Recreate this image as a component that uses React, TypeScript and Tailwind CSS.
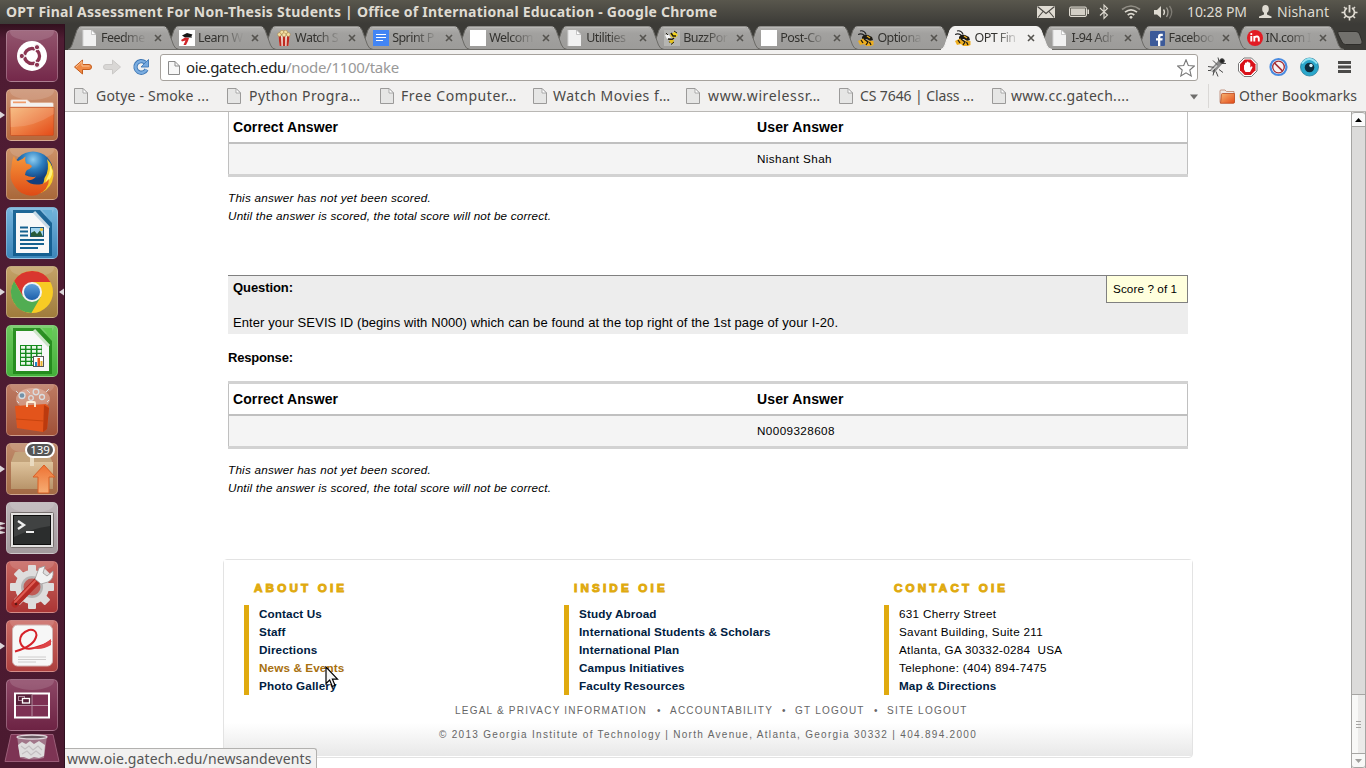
import React from 'react';

const ui = 'font-["Noto_Sans",sans-serif]';

/* ---------- small shared drawings ---------- */

function PageIcon({ className = '' }: { className?: string }) {
  return (
    <svg width="14" height="16" viewBox="0 0 14 16" className={className}>
      <path d="M.5 .5H9L13.500 5V15.500H.5Z" fill="#e6e6e5" stroke="#9b9a99" />
      <path d="M9 .5V5H13.500Z" fill="#fff" stroke="#9a9a9a" strokeWidth=".8" />
    </svg>
  );
}

function TabPage() {
  return (
    <svg width="16" height="16" viewBox="0 0 16 16">
      <path d="M1 0H9.500L14 4.500V16H1Z" fill="#f1f1f1" />
      <path d="M9.500 0V4.500H14Z" fill="#fff" stroke="#b9b9b9" strokeWidth=".8" />
      <path d="M1 16V0" stroke="#d2d2d2" />
    </svg>
  );
}

function Bee() {
  return (
    <svg width="16" height="16" viewBox="0 0 16 16">
      <path d="M2 1Q6 0 8 4M0 4.500Q3 3 6 5" fill="none" stroke="#222" strokeWidth="1.100" />
      <path d="M4 7Q6 3.500 10 5L14 7L15 10L12 11L9 9L4 9Z" fill="#1c1a14" />
      <path d="M0 11L5 8.500L9 10.500L15.500 11V15L13 16H8L6 14L2 15Z" fill="#eeae1e" />
      <path d="M6 9L10 12L8 15M11.500 12L13 15M3 10L5 13" stroke="#1c1a14" strokeWidth="1.300" fill="none" />
      <path d="M9 6L12 8" stroke="#eeae1e" strokeWidth="1.400" />
    </svg>
  );
}

function BuzzBee() {
  return (
    <svg width="16" height="16" viewBox="0 0 16 16">
      <rect width="16" height="16" fill="#b5b5b2" />
      <path d="M1 5L5 5L7 8L3 9Z" fill="#f4f4f4" />
      <path d="M6 4L11 2L14 5L11 8L7 7Z" fill="#f1d320" />
      <path d="M7 3L9 6L12 6M4 9L8 9.500L10 8M5 12L8 11" stroke="#201d10" strokeWidth="1.500" fill="none" />
      <path d="M6 10L10 10L9 14L5 12Z" fill="#e4c01b" />
      <path d="M10 1L13 3M7 14.500L10 12M2 3L4 5" stroke="#201d10" strokeWidth="1" />
    </svg>
  );
}

const favicons: Record<string, React.ReactNode> = {
  page: <TabPage />,
  bee: <Bee />,
  buzz: <BuzzBee />,
  blank: <div className="h-4 w-4 bg-white" />,
  learn: (
    <svg width="16" height="16" viewBox="0 0 16 16">
      <rect width="16" height="16" fill="#fff" />
      <path d="M3 5.500L8 3L13.500 4.500L11 7.500L6 7.500Z" fill="#161616" />
      <path d="M12 5V8" stroke="#161616" />
      <path d="M2 10L6 7.500L10 8L9 11L7 15H4.500L6.500 10.500L3 11.500Z" fill="#d0262b" />
    </svg>
  ),
  popcorn: (
    <svg width="16" height="16" viewBox="0 0 16 16">
      <path d="M2.500 5.500H13.500L12.500 16H3.500Z" fill="#f2e6dd" />
      <path d="M2.500 6H5L5.500 16H3.500ZM6.800 6H9.200V16H6.800ZM11 6H13.500L12.500 16H10.500Z" fill="#bf2a20" />
      <g fill="#f3dfa6" stroke="#a77f3c" strokeWidth=".5">
        <circle cx="3.500" cy="4.500" r="1.900" /><circle cx="6" cy="2.300" r="2" /><circle cx="9.500" cy="2.300" r="2" />
        <circle cx="12.300" cy="4.500" r="1.900" /><circle cx="8" cy="4.800" r="2" />
      </g>
    </svg>
  ),
  docs: (
    <svg width="16" height="16" viewBox="0 0 16 16">
      <rect width="16" height="16" fill="#4285f4" />
      <path d="M3 4.500H13M3 7.500H13M3 10.500H10" stroke="#fff" strokeWidth="1.200" />
    </svg>
  ),
  fb: (
    <svg width="15" height="15" viewBox="0 0 15 15">
      <rect width="15" height="15" rx="1" fill="#3c5a99" />
      <path d="M8 15V9.500H6V7.300H8V5.500Q8 2.800 10.700 2.800H12.800V5H11.300Q10.300 5 10.300 6V7.300H12.700L12.400 9.500H10.300V15Z" fill="#fff" />
    </svg>
  ),
  incom: (
    <svg width="16" height="16" viewBox="0 0 16 16">
      <circle cx="8" cy="8" r="8" fill="#e31b23" />
      <path d="M4.300 6V11.500M7.300 11.500V6M7.300 8Q8 6.300 10 6.500Q11.800 6.700 11.800 8.700V11.500" stroke="#fff" strokeWidth="1.900" fill="none" />
      <circle cx="4.300" cy="4" r="1.100" fill="#fff" />
    </svg>
  ),
};

/* ---------- title bar ---------- */

function TitleBar() {
  return (
    <div className={`flex h-6 w-full items-center bg-gradient-to-b from-[#59574d] to-[#3c3b37] text-[14px] text-[#dfdbd2] ${ui}`}>
      <div className="w-[1029px] whitespace-nowrap pl-[6px] font-bold leading-6 tracking-[0.235px]">
        OPT Final Assessment For Non-Thesis Students | Office of International Education - Google Chrome
      </div>
      <svg width="150" height="24" viewBox="1029 0 150 24" className="shrink-0">
        <rect x="1037" y="6" width="18" height="12" fill="#dfdbd2" />
        <path d="M1037.500 6.500L1046 13.500L1054.500 6.500M1038 17.500L1043 11.500M1054 17.500L1049 11.500" fill="none" stroke="#4a4843" strokeWidth="1.100" />
        <rect x="1069.500" y="7" width="17" height="9.500" rx="1.500" fill="#6a6860" stroke="#dfdbd2" />
        <rect x="1071" y="8.500" width="14" height="6.500" fill="#d3cfc6" />
        <rect x="1087.500" y="9.500" width="1.500" height="4.500" fill="#dfdbd2" />
        <path d="M1100 8L1107.500 15L1104 18.500V5L1107.500 8.500L1100 15.500" fill="none" stroke="#dfdbd2" strokeWidth="1.100" />
        <g fill="none" stroke="#dfdbd2" strokeWidth="1.700">
          <path d="M1122 9.500Q1131 2.500 1140 9.500" opacity=".45" />
          <path d="M1125 12.200Q1131 7.500 1137 12.200" />
          <path d="M1127.700 15Q1131 12.300 1134.300 15" />
        </g>
        <circle cx="1131" cy="17.300" r="1.400" fill="#dfdbd2" />
        <path d="M1154 10H1157L1161 6V18L1157 14.500H1154Z" fill="#dfdbd2" />
        <g fill="none" stroke="#dfdbd2" strokeWidth="1.300">
          <path d="M1163.500 9.500Q1165.500 12 1163.500 15" />
          <path d="M1166.500 7.500Q1169.500 12 1166.500 17" opacity=".6" />
          <path d="M1169.500 6Q1174 12 1169.500 18.500" opacity=".35" />
        </g>
      </svg>
      <span className="w-[79px] shrink-0 whitespace-nowrap pl-[8px] leading-6 tracking-[-0.085px]">10:28 PM</span>
      <svg width="14" height="14" viewBox="0 0 14 14" className="shrink-0" fill="#dfdbd2">
        <ellipse cx="7.500" cy="4" rx="3.300" ry="4" />
        <path d="M6 7H9V9.500L13.500 11.500V13H1V11.500L6 9.500Z" />
      </svg>
      <span className="w-[69px] shrink-0 pl-[5px] leading-6 tracking-[0.138px]">Nishant</span>
      <svg width="17" height="18" viewBox="0 0 17 18" className="shrink-0">
        <g stroke="#dfdbd2" fill="none">
          <path d="M6 5A5 5 0 1 0 11 5" strokeWidth="1.700" />
          <path d="M8.500 2V9.500" strokeWidth="1.800" />
          <path d="M8.500 14.500V17.500M.5 9.500H3.500M13.500 9.500H16.500M3 4L4.800 5.800M14 4L12.200 5.800M3 15L4.800 13.200M14 15L12.200 13.200" strokeWidth="1.600" />
        </g>
      </svg>
    </div>
  );
}

/* ---------- launcher ---------- */

type LauncherItem = { name: string; tone: string; running?: boolean; active?: boolean; multi?: boolean; art: React.ReactNode };

const launcher: LauncherItem[] = [
  {
    name: 'dash', tone: 'from-[#93556e] to-[#74284a]',
    art: (
      <>
        <circle cx="26" cy="26" r="15" fill="#fff" />
        <circle cx="26" cy="26" r="7.500" fill="none" stroke="#8b3552" strokeWidth="3.400" />
        <path d="M26 26L13 26M26 26L32.500 14.700M26 26L32.500 37.300" stroke="#fff" strokeWidth="1.500" />
        <circle cx="26" cy="26" r="5.500" fill="#fff" />
        <g fill="#8b3552" stroke="#fff" strokeWidth="1"><circle cx="15.800" cy="26" r="2.600" /><circle cx="31" cy="17.200" r="2.600" /><circle cx="31" cy="34.800" r="2.600" /></g>
      </>
    ),
  },
  {
    name: 'files', tone: 'from-[#cb9172] to-[#b5683d]', running: true,
    art: (
      <>
        <path d="M4.500 18V12Q4.500 10.500 6 10.500H21L24.500 13.500H46Q47.500 13.500 47.500 15V18Z" fill="#f4f1ee" stroke="#dba98b" strokeWidth=".7" />
        <rect x="7" y="12.500" width="13" height="1.700" fill="#ef9b68" />
        <path d="M4 18.500H48L47.500 45.500Q47.500 46.500 46.500 46.500H5.500Q4.500 46.500 4.500 45.500Z" fill="url(#orangeFolder)" stroke="#c54d20" strokeWidth=".7" />
        <path d="M4 18.500H48V25Q26 39 4.500 38Z" fill="#fff" opacity=".13" />
      </>
    ),
  },
  {
    name: 'firefox', tone: 'from-[#cc9167] to-[#a9683a]',
    art: (
      <>
        <circle cx="27" cy="23.500" r="20" fill="url(#fxBlue)" />
        <path d="M41 11Q48 18 47.500 28Q46 40 35 45L30 44Q38 38 38.500 30Q44 22 41 11Z" fill="#f6c927" />
        <path d="M42.500 14Q46 22 41 30L39 36Q46 31 46.500 23Z" fill="#fff27a" />
        <path d="M8 8Q9 12 12 13Q16 12 19.500 8.500Q18.500 12 20 15.500Q25 16 26 18.500Q24 21 21 22Q19 24 19 27Q25 30 30 28.500Q27 33 20 32Q25 38 36 36Q41 34 43 31Q43 42 31 47Q17 50 9 39Q2 30 5.500 19Q6 11 8 8Z" fill="url(#fxFox)" />
      </>
    ),
  },
  {
    name: 'writer', tone: 'from-[#75b4dd] to-[#3c86b9]',
    art: (
      <>
        <path d="M7 3H34L46 16V49H7Z" fill="#0e588a" opacity=".85" />
        <path d="M36 3L46 3V14Z" fill="#67aed7" />
        <path d="M10 6H28L43 21V46H10Z" fill="#f8f8f8" />
        <path d="M28 5L43 21" stroke="#c7dae6" strokeWidth="3" />
        <path d="M14 20.500H22M14 24.500H22M14 28.500H22M14 33H38M14 37H38M14 41H32" stroke="#16618f" strokeWidth="1.800" />
        <rect x="24.500" y="20.500" width="13" height="9" fill="#a4d5ef" stroke="#1c5a84" />
        <path d="M25 29.500V26L28.500 24L31 27L34 23.500L37 29.500Z" fill="#275b39" />
        <circle cx="35.500" cy="22.500" r="1.600" fill="#f4cb40" />
      </>
    ),
  },
  {
    name: 'chrome', tone: 'from-[#c4a268] to-[#a07c3c]', running: true, active: true,
    art: (
      <>
        <circle cx="26" cy="26" r="21" fill="#f8cb24" />
        <path d="M26 16H44.500A21 21 0 0 0 8.100 15L17.300 31Z" fill="#d9362f" />
        <path d="M17.300 31L8.100 15A21 21 0 0 0 25.400 47L34.700 31Z" fill="#51ad52" />
        <circle cx="26" cy="26" r="10" fill="#f2f2f2" />
        <circle cx="26" cy="26" r="8" fill="url(#chromeBlue)" />
      </>
    ),
  },
  {
    name: 'calc', tone: 'from-[#6cc95d] to-[#44b03a]',
    art: (
      <>
        <path d="M7 3H34L46 16V49H7Z" fill="#208519" opacity=".85" />
        <path d="M36 3L46 3V14Z" fill="#5fc850" />
        <path d="M10 6H28L43 21V46H10Z" fill="#f8f8f8" />
        <path d="M28 5L43 21" stroke="#cbe5c7" strokeWidth="3" />
        <rect x="14" y="20" width="22" height="21" fill="#168a1e" />
        <g fill="#eaf7e9">
          {[21, 25, 29, 33, 37].map((y) => [15, 20.5, 26, 31.5].map((x) => <rect key={`${x}-${y}`} x={x} y={y} width="4" height="2.700" />))}
        </g>
        <rect x="27.500" y="31.500" width="10" height="10" fill="#fff" stroke="#555" />
        <path d="M29 37H31V41H29Z" fill="#1e88c9" /><path d="M31.500 33H34V41H31.500Z" fill="#e2571c" /><path d="M34.500 36H36.500V41H34.500Z" fill="#e8b329" />
      </>
    ),
  },
  {
    name: 'software', tone: 'from-[#bd7a62] to-[#a05037]',
    art: (
      <>
        <ellipse cx="27" cy="15" rx="17" ry="11" fill="#f6cdbb" opacity=".45" />
        <g fill="none" stroke="#d9dde0" strokeWidth="1.300">
          <circle cx="16" cy="11.500" r="3" fill="#7291a8" /><circle cx="30" cy="8" r="2.800" /><circle cx="36" cy="13" r="2.500" /><circle cx="25" cy="14" r="2.300" />
          <path d="M21 6L24 9M10 7L12 9M40 8L43 5M41 18L43 16M11 17L13 19" strokeWidth="1" />
        </g>
        <path d="M9 22L40 20L43 23L41 45L37 48L11 44Z" fill="#e3541b" />
        <path d="M38 21L43 24L41 45L37 48Z" fill="#bb3a0e" />
        <path d="M10 35L38 37" stroke="#c8440f" />
        <path d="M21 23V19Q21 18 22 18H28Q29 18 29 19V23" fill="none" stroke="#fff1d9" strokeWidth="1.800" />
      </>
    ),
  },
  {
    name: 'updates', tone: 'from-[#c08a6a] to-[#a36a45]', running: true,
    art: (
      <>
        <path d="M5 19L9 9H42L46 18V46H5Z" fill="#c3a47c" />
        <path d="M5 19H47V46H5Z" fill="url(#boxFace)" />
        <path d="M24 9H28V23H24Z" fill="#e9dac0" />
        <path d="M38 22L49 34H43V50H32V34H27Z" fill="url(#arrowUp)" stroke="#d85e25" strokeWidth="1" />
      </>
    ),
  },
  {
    name: 'terminal', tone: 'from-[#bdb5b8] to-[#a39a9d]', multi: true,
    art: (
      <>
        <rect x="4.500" y="10.500" width="43" height="35" rx="1" fill="#e4e2e1" stroke="#77706f" />
        <rect x="7.500" y="13.500" width="37" height="29" fill="#2b2d2d" stroke="#0d0d0d" />
        <path d="M8 14H44V24Q24 27 8 35Z" fill="#fff" opacity=".1" />
        <path d="M12 19L18 23L12 27" fill="none" stroke="#eee" strokeWidth="2.300" />
        <path d="M20 30H28" stroke="#eee" strokeWidth="2" />
      </>
    ),
  },
  {
    name: 'settings', tone: 'from-[#c76660] to-[#ab3535]',
    art: (
      <>
        <g fill="#dedddd">
          <circle cx="26" cy="26" r="17" />
          {[0, 45, 90, 135].map((a) => <rect key={a} x="22" y="4" width="8" height="44" rx="1" transform={`rotate(${a} 26 26)`} />)}
        </g>
        <circle cx="26" cy="26" r="11" fill="#b6b4b4" /><circle cx="26" cy="26" r="8.500" fill="#c05a55" />
        <path d="M9 43L31 20" stroke="#b42a25" strokeWidth="7" strokeLinecap="round" />
        <path d="M9 41L29 20" stroke="#e05d54" strokeWidth="2" strokeLinecap="round" />
        <path d="M29 18L33 7L39 5L37 12L41 15L47 10Q48 18 42 21L35 23Z" fill="#f2f2f2" stroke="#9c9898" strokeWidth=".8" />
        <circle cx="10" cy="43" r="1.300" fill="#5c1714" />
      </>
    ),
  },
  {
    name: 'reader', tone: 'from-[#ca6a64] to-[#ad3f3e]', running: true,
    art: (
      <>
        <rect x="6.500" y="5" width="40" height="41" rx="5" fill="#f7f7f7" stroke="#d1b5b4" />
        <path d="M9 31.500Q29 26 30.500 15Q30 9 23 10Q14 13 14 21Q16 31 28 28Q37 26 45 21" fill="none" stroke="#d6232b" strokeWidth="2" />
        <path d="M25 28Q34 28 45 19V25Q35 31 25 28Z" fill="#dd4447" />
        <path d="M12 37H40M12 39.500H40M12 42H30" stroke="#c8c6c6" strokeWidth=".9" />
      </>
    ),
  },
  {
    name: 'workspaces', tone: 'from-[#8d4766] to-[#6d2344]',
    art: (
      <>
        <rect x="9" y="14.500" width="34" height="24" fill="#7d3053" stroke="#fff" strokeWidth="2" />
        <path d="M10 15.500H26V26.500H10Z" fill="#562039" />
        <path d="M26 15.500V37.500M10 26.500H42" stroke="#b48ca0" strokeWidth="1" />
        <rect x="12.500" y="17.500" width="6" height="4" fill="none" stroke="#b48ca0" />
        <rect x="16.500" y="19.500" width="7" height="4.500" fill="#562039" stroke="#fff" strokeWidth="1.300" />
      </>
    ),
  },
];

function Launcher() {
  return (
    <div className="flex w-[65px] shrink-0 flex-col items-center overflow-hidden border-r border-[#2f1020] bg-gradient-to-b from-[#32101e] via-[#4f1c33] via-[2%] to-[#4b1a30] pt-[6px]">
      <svg width="0" height="0" className="absolute">
        <defs>
          <linearGradient id="orangeFolder" x1="0" y1="0" x2="1" y2="1"><stop stopColor="#f6b573" /><stop offset="1" stopColor="#e44a17" /></linearGradient>
          <radialGradient id="fxBlue" cx=".5" cy=".2"><stop stopColor="#8fcdf0" /><stop offset=".5" stopColor="#2c7fc0" /><stop offset="1" stopColor="#123f7d" /></radialGradient>
          <linearGradient id="fxFox" x1="0" y1="0" x2="0" y2="1"><stop stopColor="#f6953a" /><stop offset="1" stopColor="#de4b16" /></linearGradient>
          <linearGradient id="chromeBlue" x1="0" y1="0" x2="0" y2="1"><stop stopColor="#5f9fda" /><stop offset="1" stopColor="#1c5faa" /></linearGradient>
          <linearGradient id="boxFace" x1="0" y1="0" x2="0" y2="1"><stop stopColor="#dec39c" /><stop offset="1" stopColor="#b8946a" /></linearGradient>
          <linearGradient id="arrowUp" x1="0" y1="0" x2="0" y2="1"><stop stopColor="#ee7233" /><stop offset="1" stopColor="#f6ad74" /></linearGradient>
        </defs>
      </svg>
      {launcher.map((it) => (
        <div key={it.name} className="relative mb-[7px] flex h-[52px] w-full shrink-0 justify-center">
          <div className={`h-[52px] w-[52px] rounded-[5px] border border-white/25 bg-gradient-to-b ${it.tone}`}>
            <svg width="52" height="52" viewBox="0 0 52 52" className="-m-px">
              <ellipse cx="26" cy="2" rx="22" ry="9" fill="#fff" opacity=".13" />
              {it.art}
            </svg>
          </div>
          {it.running && <svg width="5" height="8" viewBox="0 0 5 8" className="absolute left-0 top-[22px]"><path d="M0 .5L5 4L0 7.500Z" fill="#dcd6d9" /></svg>}
          {it.active && <svg width="5" height="8" viewBox="0 0 5 8" className="absolute right-0 top-[22px]"><path d="M5 .5L0 4L5 7.500Z" fill="#dcd6d9" /></svg>}
          {it.multi && <svg width="5" height="12" viewBox="0 0 5 12" className="absolute left-0 top-[20px]"><path d="M0 0L5 1.500L0 3ZM0 4.500L5 6L0 7.500ZM0 9L5 10.500L0 12Z" fill="#dcd6d9" stroke="#dcd6d9" strokeWidth=".5" /></svg>}
          {it.name === 'updates' && (
            <div className={`absolute -top-px left-[25px] h-4 w-[30px] rounded-full border-2 border-white bg-[#565656] text-center text-[11.500px] leading-[12px] text-white ${ui}`}>139</div>
          )}
        </div>
      ))}
      <svg width="56" height="32" viewBox="0 0 56 32" className="-mt-[5px] shrink-0">
        <path d="M7 1.500H49L55 28.500H1Z" fill="#7d3454" stroke="#9b5d78" />
        <path d="M13 3H43L40 25Q28 28 16 25Z" fill="#b9a3ad" opacity=".6" />
        <ellipse cx="28" cy="4" rx="15" ry="2" fill="#6b5a62" stroke="#ded5d9" strokeWidth="1.300" />
        <path d="M14 12L18 9L22 11L26 8L30 11L35 8L41 12L40 23L35 25L30 24L25 26L20 24L16 24Z" fill="#dedddd" />
        <path d="M17 13L21 16L25 13L29 17L34 13L38 17M18 21L23 18L27 22L32 18L37 22" fill="none" stroke="#c3bfc1" strokeWidth="1.100" />
      </svg>
    </div>
  );
}

/* ---------- tabs ---------- */

const tabs = [
  { icon: 'page', label: 'Feedme' },
  { icon: 'learn', label: 'Learn W' },
  { icon: 'popcorn', label: 'Watch S' },
  { icon: 'docs', label: 'Sprint P' },
  { icon: 'blank', label: 'Welcom' },
  { icon: 'page', label: 'Utilities' },
  { icon: 'buzz', label: 'BuzzPor' },
  { icon: 'blank', label: 'Post-Co' },
  { icon: 'bee', label: 'Optiona' },
  { icon: 'bee', label: 'OPT Fin', active: true },
  { icon: 'page', label: 'I-94 Adr' },
  { icon: 'fb', label: 'Faceboo' },
  { icon: 'incom', label: 'IN.com I' },
];

const layers = ['z-[13]', 'z-[12]', 'z-[11]', 'z-10', 'z-[9]', 'z-[8]', 'z-[7]', 'z-[6]', 'z-[5]', 'z-20', 'z-[4]', 'z-[3]', 'z-[2]'];

function TabStrip() {
  return (
    <div className="flex h-[26px] items-end bg-[#3c3b37] pl-[3px]">
      {tabs.map((t, i) => (
        <div key={i} className={`relative h-[25px] w-[97.050px] shrink-0 ${layers[i]}`}>
          <svg width="113" height="25" viewBox="0 0 113 25" className="absolute left-0 top-0">
            <defs>
              <linearGradient id="tabGray" x1="0" y1="0" x2="0" y2="1"><stop stopColor="#b1b0ae" /><stop offset=".3" stopColor="#a2a19f" /><stop offset="1" stopColor="#9c9b99" /></linearGradient>
            </defs>
            <path
              d="M0 24.500Q2.500 24 4 20L9 5Q10.500 1.500 14 1.500H95Q98.500 1.500 100 5L105.500 20Q107 24 111 24.500Z"
              fill={t.active ? '#f2f1f0' : 'url(#tabGray)'}
              stroke={t.active ? '#f2f1f0' : '#6b6a66'}
              strokeWidth="1"
            />
            {!t.active && <path d="M11 2.500Q12 2 14 2H95Q97 2 98 2.700" fill="none" stroke="#c9c8c6" strokeWidth=".8" />}
          </svg>
          <div className="relative flex h-full items-center pl-[14px] pt-px">
            <div className="flex h-4 w-4 items-center justify-center">{favicons[t.icon]}</div>
            <div className={`ml-[3px] w-[48px] overflow-hidden whitespace-nowrap text-[12.500px] leading-[18px] tracking-[-0.550px] text-[#33322f] [mask-image:linear-gradient(to_right,black_45%,transparent_95%)] ${ui}`}>
              {t.label}
            </div>
            <svg width="8" height="8" viewBox="0 0 8 8" className="ml-[5px]"><path d="M1 1L7 7M7 1L1 7" stroke="#55534f" strokeWidth="1.600" /></svg>
          </div>
        </div>
      ))}
      <svg width="30" height="22" viewBox="0 0 30 22" className="relative mb-[2px] ml-[6px]">
        <path d="M3 5.500H20Q22.500 5.500 23.500 8L26 15Q27 18.500 24 18.500H9.500Q7 18.500 6 16L2 8Q1 5.500 3 5.500Z" fill="#72716d" stroke="#2e2d2a" />
      </svg>
    </div>
  );
}

/* ---------- toolbar and bookmarks ---------- */

function Toolbar() {
  return (
    <div className="flex h-[34px] items-center bg-[#f2f1f0]">
      <svg width="95" height="34" viewBox="65 50.500 95 34" className="shrink-0">
        <path d="M74.500 67.500L82.500 60.500V65H89Q91.500 65 91.500 67.500Q91.500 70 89 70H82.500V74.500Z" fill="#f08a45" stroke="#c45c1c" />
        <path d="M76 67.500L82 62V66.500H89.500" stroke="#fbc193" fill="none" />
        <path d="M120.500 67.500L112.500 60.500V65H106Q103.500 65 103.500 67.500Q103.500 70 106 70H112.500V74.500Z" fill="#d9d7d5" stroke="#cbc9c7" />
        <path d="M145 63A5.800 5.800 0 1 0 146.500 70" fill="none" stroke="#3f78b5" strokeWidth="4.300" />
        <path d="M145 63A5.800 5.800 0 1 0 146.500 70" fill="none" stroke="#7bade0" strokeWidth="2.400" />
        <path d="M148.500 60V67.500H141Z" fill="#76a9df" stroke="#3f78b5" strokeWidth=".9" />
      </svg>
      <div className={`mt-px flex h-[27px] w-[1038px] shrink-0 items-center rounded-[3px] border border-[#a6a29d] bg-white pl-[7px] text-[15px] ${ui}`}>
        <svg width="12" height="16" viewBox="0 0 12 16" className="shrink-0">
          <path d="M.5 1.500H7L11.500 6V14.500H.5Z" fill="#f7f7f7" stroke="#8b8b8b" />
          <path d="M7 1.500V6H11.500" fill="none" stroke="#8b8b8b" />
        </svg>
        <span className="-mt-px ml-[6px] grow whitespace-nowrap leading-6 tracking-[-0.310px] text-[#222]">oie.gatech.edu<span className="text-[#999]">/node/1100/take</span></span>
        <svg width="18" height="18" viewBox="0 0 18 18" className="mr-[2px] shrink-0">
          <path d="M9 .8L11.300 6.500L17.400 7L12.800 11L14.200 17L9 13.800L3.800 17L5.200 11L.6 7L6.700 6.500Z" fill="#fff" stroke="#777" strokeWidth="1.100" />
        </svg>
      </div>
      <svg width="168" height="34" viewBox="1198 50.500 168 34" className="shrink-0">
        <g stroke="#4b4b4b" fill="none" strokeWidth="1">
          <path d="M1212 72L1221 62" stroke="#8a8a8a" strokeWidth="5" />
          <path d="M1208 67L1215 68L1213 76M1208 71L1214 71M1213 61L1217 65M1219 70L1223 73M1216 72L1218 77M1219 62L1218 58M1222 64L1226 64" />
          <path d="M1211 72L1217 66" stroke="#cfcfcf" strokeWidth="1.600" />
          <circle cx="1222" cy="61.500" r="2.300" fill="#222" />
        </g>
        <path d="M1244 58.500H1251.500L1257 64V71.500L1251.500 77H1244L1238.500 71.500V64Z" fill="#fff" stroke="#777" />
        <path d="M1244.700 60H1250.800L1255.500 64.700V70.800L1250.800 75.500H1244.700L1240 70.800V64.700Z" fill="#d9121a" />
        <path d="M1244 66Q1244 65 1245 65V63.500Q1246 62.500 1246.700 63.500V62.500Q1248 61.500 1248.700 63Q1250 62.500 1250.300 64V68L1252 66.500L1252.500 68L1250 72.500H1245.500L1244 70Z" fill="#fff" />
        <circle cx="1278.500" cy="67.500" r="8" fill="#fff" stroke="#4a8be0" strokeWidth="2.200" />
        <circle cx="1278.500" cy="67.500" r="5.800" fill="#f9f3f3" stroke="#a12a34" strokeWidth="1.300" />
        <path d="M1274.500 63.500L1282.500 71.500" stroke="#a12a34" strokeWidth="1.700" />
        <circle cx="1309.500" cy="67.500" r="9" fill="#2ba7cb" stroke="#2a7e9a" strokeWidth=".8" />
        <path d="M1302 64Q1309 55 1317 64" fill="none" stroke="#92e3f2" strokeWidth="2" />
        <circle cx="1309.500" cy="68" r="4.800" fill="#0d2c3c" />
        <circle cx="1311" cy="66" r="1.700" fill="#d8f2f8" />
        <path d="M1338 63H1351M1338 67.500H1351M1338 72H1351" stroke="#4b4a48" strokeWidth="2.800" />
      </svg>
    </div>
  );
}

const bookmarks = [
  { label: 'Gotye - Smoke ...', w: 'w-[153px]', t: 'ml-[8px] tracking-[0.184px]' },
  { label: 'Python Progra…', w: 'w-[153px]', t: 'ml-[8px] tracking-[0.418px]' },
  { label: 'Free Computer…', w: 'w-[153px]', t: 'ml-[7px] tracking-[0.600px]' },
  { label: 'Watch Movies f…', w: 'w-[153px]', t: 'ml-[6px] tracking-[0.491px]' },
  { label: 'www.wirelessr…', w: 'w-[153px]', t: 'ml-[8px] tracking-[0.634px]' },
  { label: 'CS 7646 | Class ...', w: 'w-[153px]', t: 'ml-[7px] tracking-[-0.101px]' },
  { label: 'www.cc.gatech....', w: 'w-[199px]', t: 'ml-[5px] tracking-[0.301px]' },
];

function Bookmarks() {
  return (
    <div className={`flex h-[28px] items-center border-b border-[#b9b7b4] bg-[#f2f1f0] pb-[3px] pl-[9px] text-[14px] text-[#4a4947] ${ui}`}>
      {bookmarks.map((b) => (
        <div key={b.label} className={`flex shrink-0 items-center ${b.w}`}>
          <PageIcon className="shrink-0" />
          <span className={`whitespace-nowrap leading-6 ${b.t}`}>{b.label}</span>
        </div>
      ))}
      <svg width="8" height="6" viewBox="0 0 8 6" className="-ml-px mt-[2px] shrink-0"><path d="M0 .5H8L4 5.500Z" fill="#6f6e6c" /></svg>
      <div className="ml-[10px] h-6 w-px shrink-0 bg-[#dad8d6]" />
      <svg width="17" height="15" viewBox="0 0 17 15" className="ml-[10px] shrink-0">
        <path d="M1 13.500V2Q1 1 2 1H6L7.500 2.500H15V13.500Z" fill="#efe9e4" stroke="#b9806a" strokeWidth=".8" />
        <path d="M2.500 5.500Q2.500 4.500 3.500 4.500H15.500V13Q15.500 14.300 14.500 14.300H1.500Z" fill="url(#orangeFolder)" stroke="#bb4a20" strokeWidth=".8" />
      </svg>
      <span className="ml-[3px] whitespace-nowrap leading-6 tracking-[0.116px]">Other Bookmarks</span>
    </div>
  );
}

/* ---------- page ---------- */

function AnswerTable({ answer, top }: { answer: string; top?: boolean }) {
  return (
    <div className={`border-b-[3px] border-[#d2d2d2] ${top ? 'border-t-[3px]' : ''}`}>
      <div className="border-x border-[#c0c0c0]">
        <div className="flex h-8 items-center border-b-2 border-[#c0c0c0] text-[14px] font-bold leading-[30px] tracking-[0.100px]">
          <div className="w-[524px] pl-[4px]">Correct Answer</div>
          <div className="pl-[4px] tracking-[0.141px]">User Answer</div>
        </div>
        <div className="flex h-[30px] items-center bg-[#f4f4f4] pl-[528px] text-[11.700px] tracking-[0.400px]">{answer}</div>
      </div>
    </div>
  );
}

function NotScored() {
  return (
    <div className="mt-[12px] text-[11.700px] italic leading-[18px] tracking-[0.188px]">
      <p className="tracking-[0.240px]">This answer has not yet been scored.</p>
      <p>Until the answer is scored, the total score will not be correct.</p>
    </div>
  );
}

const columns = [
  { title: 'ABOUT OIE', links: ['Contact Us', 'Staff', 'Directions', 'News & Events', 'Photo Gallery'] },
  { title: 'INSIDE OIE', links: ['Study Abroad', 'International Students & Scholars', 'International Plan', 'Campus Initiatives', 'Faculty Resources'] },
];

function Heading({ children }: { children: React.ReactNode }) {
  return <h3 className="h-[45px] pl-[10px] pt-[19px] text-[11.700px] font-bold leading-[18px] tracking-[3.150px] text-[#e0aa0f] [-webkit-text-stroke:1px_#e0aa0f]">{children}</h3>;
}

function Footer() {
  return (
    <div className="-ml-[5px] mt-[62px] h-[199px] w-[970px] rounded-[4px] border border-[#e3e3e3] bg-white">
      <div className="flex h-[196px] flex-col bg-[linear-gradient(to_bottom,white_83%,#e8e8e8_100%)] text-[11.700px]">
        <div className="flex pl-[20px]">
          {columns.map((c) => (
            <div key={c.title} className="w-80">
              <Heading>{c.title}</Heading>
              <ul className="border-l-[5px] border-[#e0aa0f] pl-[10px] font-bold leading-[18px] tracking-[0.120px] text-[#00203f]">
                {c.links.map((l) => <li key={l} className={l === 'News & Events' ? 'text-[#a8700f]' : ''}>{l}</li>)}
              </ul>
            </div>
          ))}
          <div className="w-72">
            <Heading>CONTACT OIE</Heading>
            <div className="border-l-[5px] border-[#e0aa0f] pl-[10px] leading-[18px] tracking-[0.300px]">
              <p>631 Cherry Street</p>
              <p>Savant Building, Suite 211</p>
              <p>Atlanta, GA 30332-0284&nbsp; USA</p>
              <p>Telephone: (404) 894-7475</p>
              <p className="font-bold tracking-[0.120px] text-[#00203f]">Map &amp; Directions</p>
            </div>
          </div>
        </div>
        <div className="mt-[6px] flex h-[18px] items-center whitespace-nowrap pl-[231px] text-[10px] tracking-[1.220px] text-[#666]">
          <span className="w-[202px]">LEGAL &amp; PRIVACY INFORMATION</span>
          <span className="w-[13px]">•</span><span className="w-[112px]">ACCOUNTABILITY</span>
          <span className="w-[13px]">•</span><span className="w-[79px]">GT LOGOUT</span>
          <span className="w-[13px]">•</span><span>SITE LOGOUT</span>
        </div>
        <div className="mt-[7px] h-[18px] whitespace-nowrap pl-[215px] text-[10px] leading-[18px] tracking-[1.298px] text-[#666]">
          © 2013 Georgia Institute of Technology | North Avenue, Atlanta, Georgia 30332 | 404.894.2000
        </div>
      </div>
    </div>
  );
}

function Page() {
  return (
    <div className='relative h-[656px] grow overflow-hidden bg-white pl-[163px] font-["Liberation_Sans",Arial,sans-serif] text-[13px] text-black'>
      <div className="w-[960px]">
        <AnswerTable answer="Nishant Shah" />
        <NotScored />
        <div className="relative mt-[50px] h-[59px] border-t border-[#808080] bg-[#ededed] pl-[5px]">
          <div className="pt-[3px] font-bold leading-[18px] tracking-[-0.083px]">Question:</div>
          <div className="mt-[17px] whitespace-nowrap leading-[18px] tracking-[0.093px]">
            Enter your SEVIS ID (begins with N000) which can be found at the top right of the 1st page of your I-20.
          </div>
          <div className="absolute -top-px right-0 flex h-[28px] w-[82px] items-center border border-[#808080] bg-[#ffffdd] pl-[6px] text-[11.700px] tracking-[0.100px]">Score ? of 1</div>
        </div>
        <div className="mb-[14px] mt-[15px] font-bold leading-[18px] tracking-[-0.182px]">Response:</div>
        <AnswerTable answer="N0009328608" top />
        <NotScored />
        <Footer />
      </div>
      <div className={`absolute bottom-0 left-0 h-[20px] w-[252px] rounded-tr-[3px] border-r border-t border-[#b2b1af] bg-[#f2f1f0] pl-[2px] text-[14px] leading-[19px] tracking-[0.110px] text-[#555] ${ui}`}>
        www.oie.gatech.edu/newsandevents
      </div>
      <svg width="14" height="22" viewBox="0 0 14 22" className="absolute left-[260px] top-[554px]">
        <path d="M1 1V17.500L4.700 14L7.300 20.500L10 19.300L7.400 13.200H12.500Z" fill="#f5f5f5" stroke="#000" strokeWidth="1.200" />
      </svg>
    </div>
  );
}

function Scrollbar() {
  return (
    <div className="flex h-[656px] w-[15px] shrink-0 flex-col border-x border-[#a6a5a3] bg-[#dcdbda]">
      <div className="flex h-[15px] items-center justify-center rounded-t-[3px] border-b border-t border-[#a6a5a3] bg-[#fafafa]">
        <svg width="7" height="4" viewBox="0 0 7 4"><path d="M3.500 0L7 4H0Z" fill="#000" /></svg>
      </div>
      <div className="grow" />
      <div className="flex h-[60px] flex-col items-center justify-center gap-[2px] border-y border-[#a6a5a3] bg-gradient-to-r from-[#f8f8f7] from-50% to-[#ebeae9] to-50%">
        <div className="h-px w-[5px] bg-[#a6a5a3]" /><div className="h-px w-[5px] bg-[#a6a5a3]" /><div className="h-px w-[5px] bg-[#a6a5a3]" />
      </div>
      <div className="flex h-[14px] items-center justify-center rounded-b-[3px] border-b border-[#a6a5a3] bg-[#f8f8f7]">
        <svg width="7" height="4" viewBox="0 0 7 4"><path d="M0 0H7L3.500 4Z" fill="#a09f9d" /></svg>
      </div>
    </div>
  );
}

export default function App() {
  return (
    <div className="flex h-[768px] w-[1366px] flex-col overflow-hidden bg-white">
      <TitleBar />
      <div className="flex h-[744px]">
        <Launcher />
        <div className="flex w-[1301px] flex-col">
          <TabStrip />
          <Toolbar />
          <Bookmarks />
          <div className="flex">
            <Page />
            <Scrollbar />
          </div>
        </div>
      </div>
    </div>
  );
}
